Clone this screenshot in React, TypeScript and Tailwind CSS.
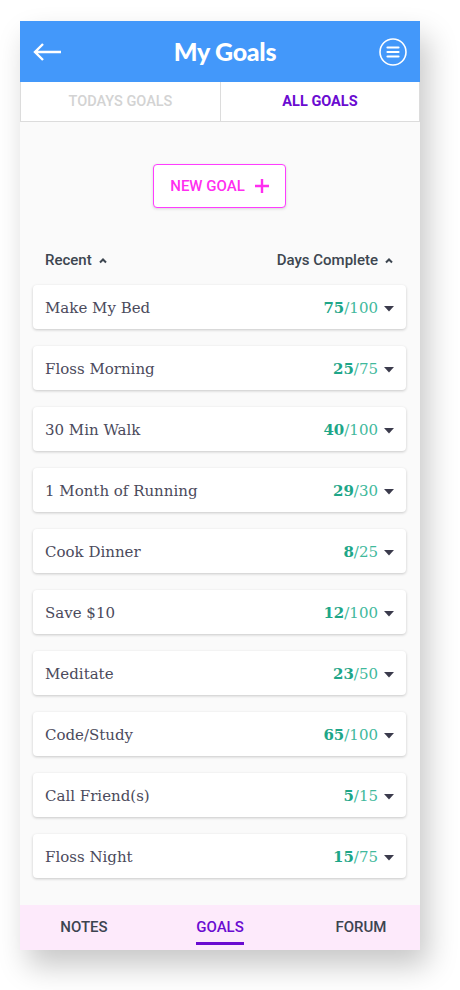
import React from 'react'

const goals = [
  { name: 'Make My Bed', done: 75, total: 100 },
  { name: 'Floss Morning', done: 25, total: 75 },
  { name: '30 Min Walk', done: 40, total: 100 },
  { name: '1 Month of Running', done: 29, total: 30 },
  { name: 'Cook Dinner', done: 8, total: 25 },
  { name: 'Save $10', done: 12, total: 100 },
  { name: 'Meditate', done: 23, total: 50 },
  { name: 'Code/Study', done: 65, total: 100 },
  { name: 'Call Friend(s)', done: 5, total: 15 },
  { name: 'Floss Night', done: 15, total: 75 },
]

const Caret = () => (
  <svg width="10" height="6" viewBox="0 0 10 6" className="ml-[6px]">
    <path d="M0 0h10L5 5.5z" fill="#3b3b4c" />
  </svg>
)

const ChevronUp = () => (
  <svg width="10" height="7" viewBox="0 0 10 7" className="ml-[6px]">
    <path d="M2 5.5l3-3 3 3" stroke="#3d4650" strokeWidth="2" fill="none" />
  </svg>
)

const App = () => {
  return (
    <div className="w-[460px] h-[990px] bg-white pl-[20px] pt-[21px] font-['Roboto',sans-serif]">
      <div className="w-[400px] h-[929px] flex flex-col bg-[#fafafa] shadow-[8px_16px_28px_rgba(0,0,0,0.22)]">
        <header className="h-[61px] bg-[#4398fa] flex items-center justify-between px-[12px]">
          <svg width="30" height="20" viewBox="0 0 30 20">
            <path d="M29 10H3M11 2L3 10l8 8" stroke="#fff" strokeWidth="2.4" fill="none" />
          </svg>
          <h1 className="text-white text-[25px] font-black font-['Lato',sans-serif] ml-[10px] tracking-[-0.3px]">My Goals</h1>
          <svg width="30" height="30" viewBox="0 0 30 30">
            <circle cx="15" cy="15" r="13" stroke="#fff" strokeWidth="1.6" fill="none" />
            <path d="M9.5 10.5h11M9.5 15h11M9.5 19.5h11" stroke="#fff" strokeWidth="2.2" strokeLinecap="round" />
          </svg>
        </header>
        <nav className="h-[40px] flex bg-white border-b border-[#dcdcdc]">
          <div className="w-[201px] flex items-center justify-center border-l border-r border-[#dcdcdc] text-[14.5px] font-medium text-[#d3d3d3]">
            TODAYS GOALS
          </div>
          <div className="flex-1 flex items-center justify-center border-r border-[#dcdcdc] text-[14.5px] font-bold text-[#6a0bd1]">
            ALL GOALS
          </div>
        </nav>
        <main className="flex-1 flex flex-col px-[13px] pr-[14px]">
          <div className="flex justify-center mt-[42px]">
            <button className="w-[133px] h-[44px] bg-white border border-[#ff3dff] rounded-[4px] shadow-[0_1px_3px_rgba(0,0,0,0.15)] flex items-center justify-center gap-[10px] text-[#ff2ef0] text-[15px] font-medium">
              NEW GOAL
              <svg width="14" height="14" viewBox="0 0 14 14">
                <path d="M7 0v14M0 7h14" stroke="#ff2ef0" strokeWidth="2.4" />
              </svg>
            </button>
          </div>
          <div className="flex justify-between items-center px-[12px] mt-[41px] h-[22px] text-[15px] font-medium text-[#3d4650]">
            <span className="flex items-center">Recent<ChevronUp /></span>
            <span className="flex items-center">Days Complete<ChevronUp /></span>
          </div>
          <ul className="flex flex-col gap-[17px] mt-[14px]">
            {goals.map((g) => (
              <li
                key={g.name}
                className="h-[44px] bg-white rounded-[4px] shadow-[0_1px_3px_rgba(0,0,0,0.2)] flex items-center justify-between pl-[12px] pr-[12px] pt-[3px]"
              >
                <span className="font-['DejaVu_Serif',serif] text-[15px] text-[#4b4a5c]">{g.name}</span>
                <span className="flex items-center font-['DejaVu_Serif',serif] text-[15px]">
                  <span className="font-bold text-[#1ea688]">{g.done}</span>
                  <span className="text-[#3fb99c]">/{g.total}</span>
                  <Caret />
                </span>
              </li>
            ))}
          </ul>
        </main>
        <footer className="h-[45px] bg-[#fdeafb] flex items-center text-[15px] font-medium text-[#3c4450]">
          <div className="w-[128px] text-center">NOTES</div>
          <div className="w-[144px] flex justify-center">
            <span className="relative text-[#6a0bd1]">
              GOALS
              <span className="absolute left-0 right-0 -bottom-[6px] h-[3px] bg-[#6a0bd1]" />
            </span>
          </div>
          <div className="flex-1 text-center pl-[10px]">FORUM</div>
        </footer>
      </div>
    </div>
  )
}

export default App
